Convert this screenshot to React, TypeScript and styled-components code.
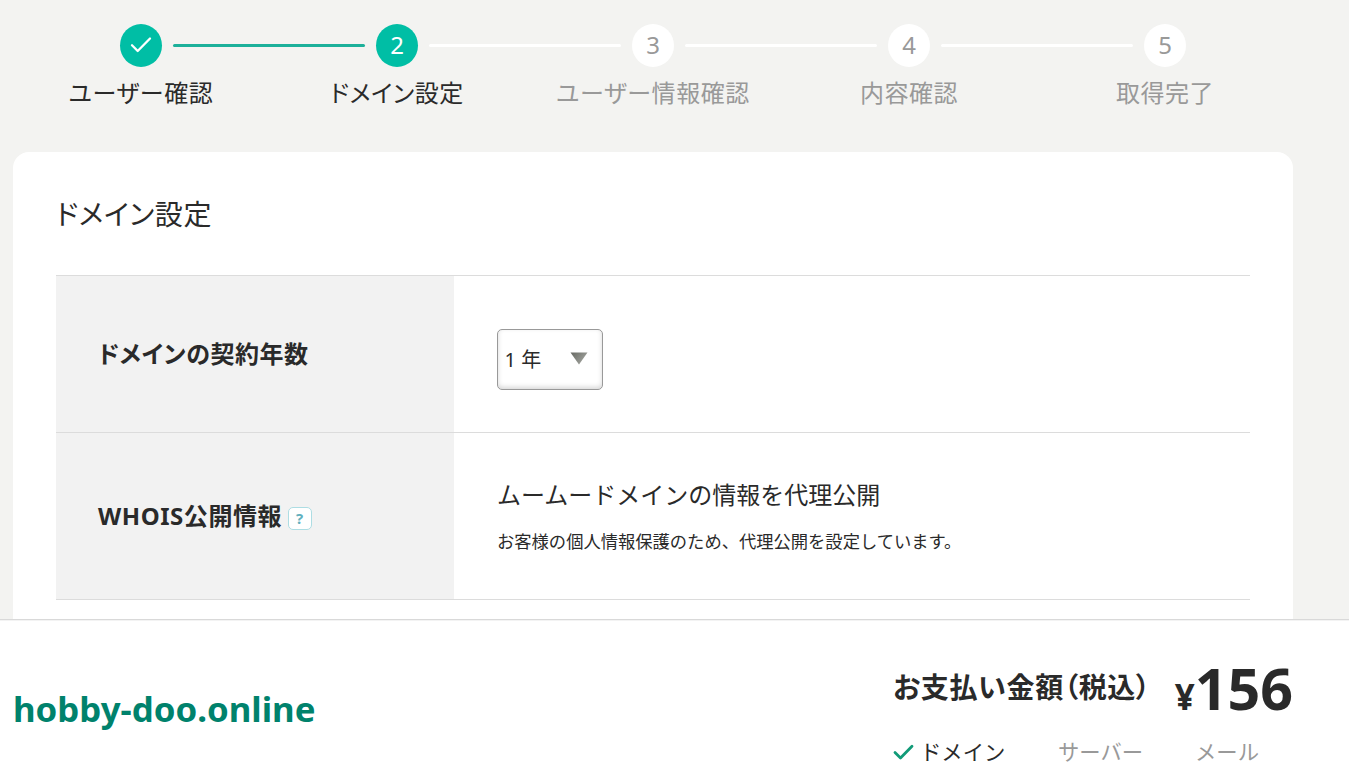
import React from "react";
import styled, { createGlobalStyle, css } from "styled-components";

const GlobalStyle = createGlobalStyle`
  * { box-sizing: border-box; }
  html, body { margin: 0; height: 100%; overflow: hidden; }
  body {
    background: #f3f3f1;
    color: #2a2a2a;
    font-family: "Noto Sans", "Noto Sans CJK JP", sans-serif;
    font-size: 24px;
    font-feature-settings: "palt";
    letter-spacing: 0.02em;
  }
`;

const Page = styled.div`
  display: flex;
  flex-direction: column;
  height: 770px;
  overflow: hidden;
`;

const Main = styled.main`
  flex: 1;
  min-height: 0;
  overflow: hidden;
  padding: 24px 56px 0 13px;
`;

const Steps = styled.ol`
  display: flex;
  margin: 0;
  padding: 0;
  list-style: none;
  height: 128px;
`;

const Step = styled.li<{ $reached: boolean }>`
  width: 256px;
  display: flex;
  flex-direction: column;
  color: ${(p) => (p.$reached ? "#2a2a2a" : "#999")};
`;

const Track = styled.div`
  display: grid;
  grid-template-columns: 96px 42px 96px;
  column-gap: 11px;
  align-items: center;
  height: 43px;
`;

const Line = styled.span<{ $side: "left" | "right"; $tone: "done" | "todo" | "none" }>`
  height: 3px;
  background: ${(p) => (p.$tone === "done" ? "#1cb09a" : p.$tone === "todo" ? "#fff" : "transparent")};
  border-radius: ${(p) => (p.$side === "left" ? "0 2px 2px 0" : "2px 0 0 2px")};
`;

const Circle = styled.span<{ $reached: boolean }>`
  display: flex;
  align-items: center;
  justify-content: center;
  width: 42px;
  height: 43px;
  padding-bottom: 2px;
  border-radius: 50%;
  font-size: 24px;
  letter-spacing: 0;
  background: ${(p) => (p.$reached ? "#00bea5" : "#fff")};
  color: ${(p) => (p.$reached ? "#fff" : "#999")};
`;

const StepLabel = styled.span`
  margin-top: 8px;
  line-height: 36px;
  text-align: center;
  letter-spacing: 0.55px;
`;

const Card = styled.section`
  background: #fff;
  border-radius: 16px 16px 0 0;
  padding: 43px 43px 0;
  height: 480px;
`;

const Title = styled.h1`
  margin: 0 0 41px;
  font-size: 28px;
  font-weight: 400;
  line-height: 39px;
  letter-spacing: 0.65px;
`;

const Row = styled.div<{ $height: number }>`
  display: grid;
  grid-template-columns: 398px 1fr;
  height: ${(p) => p.$height}px;
  border-top: 1px solid #dcdcdc;
  &:last-child { border-bottom: 1px solid #dcdcdc; }
`;

const RowHead = styled.h2`
  display: flex;
  align-items: center;
  margin: 0;
  padding: 0 42px 4px;
  background: #f2f2f2;
  font-size: 24px;
  font-weight: 700;
  letter-spacing: 0.55px;
`;

const RowBody = styled.div`
  display: flex;
  flex-direction: column;
  justify-content: center;
  align-items: flex-start;
  padding-left: 43px;
`;

const HelpBadge = styled.button`
  width: 24px;
  height: 23px;
  margin: 8px 0 0 5.5px;
  padding: 0;
  border: 1px solid #addde3;
  border-radius: 5px;
  background: #fff;
  color: #62b0be;
  font: 700 15px/20px "Noto Sans", sans-serif;
`;

const YearSelect = styled.button`
  display: flex;
  align-items: center;
  justify-content: space-between;
  width: 106px;
  height: 61px;
  margin-top: 10px;
  padding: 0 14px 1px 6.5px;
  border: 1px solid #999;
  border-radius: 5px;
  background: #fff;
  box-shadow: inset 0 -2px 5px rgba(0, 0, 0, 0.16);
  color: #2a2a2a;
  font: 400 20px "Noto Sans", "Noto Sans CJK JP", sans-serif;
`;

const Lead = styled.p`
  margin: 0;
  line-height: 36px;
  font-feature-settings: normal;
  letter-spacing: 0;
`;

const Note = styled.p`
  margin: 16px 0 0;
  font-size: 17.3px;
  line-height: 26px;
  font-feature-settings: normal;
  letter-spacing: 0;
`;

const Footer = styled.footer`
  display: flex;
  justify-content: space-between;
  flex: none;
  height: 151px;
  border-top: 1px solid #d9d9d9;
  box-shadow: inset 0 1px 0 #f3f3f3;
  background: #fff;
  padding: 0 56px 0 13px;
`;

const DomainName = styled.strong`
  margin-top: 64px;
  font-size: 34.8px;
  line-height: 50px;
  letter-spacing: 0;
  color: #00826c;
`;

const Payment = styled.div`
  width: 400px;
  padding-top: 29px;
`;

const Total = styled.div`
  display: flex;
  align-items: flex-start;
  justify-content: space-between;
  height: 83px;
  font-weight: 700;
`;

const TotalLabel = styled.span`
  margin-top: 18px;
  font-size: 28px;
  line-height: 40px;
  letter-spacing: 0.7px;
`;

const Amount = styled.span`
  font-size: 57.3px;
  line-height: 78px;
  letter-spacing: 0;
`;

const Yen = styled.small`
  font-size: 35px;
`;

const Services = styled.ul`
  display: grid;
  grid-template-columns: 165px 137px 1fr;
  margin: 0;
  padding: 0;
  list-style: none;
  font-size: 21.33px;
  line-height: 40px;
  font-feature-settings: normal;
  letter-spacing: 0;
`;

const Service = styled.li<{ $on?: boolean }>`
  display: flex;
  align-items: center;
  gap: 6px;
  color: #999;
  ${(p) => p.$on && css`color: #2a2a2a;`}
`;

const STEPS = ["ユーザー確認", "ドメイン設定", "ユーザー情報確認", "内容確認", "取得完了"];
const CURRENT = 1;

const tone = (hidden: boolean, done: boolean) => (hidden ? "none" : done ? "done" : "todo");

export default function App() {
  return (
    <Page>
      <GlobalStyle />
      <Main>
        <Steps>
          {STEPS.map((label, i) => (
            <Step key={label} $reached={i <= CURRENT}>
              <Track>
                <Line $side="left" $tone={tone(i === 0, i <= CURRENT)} />
                <Circle $reached={i <= CURRENT}>
                  {i < CURRENT ? (
                    <svg width="22" height="18" viewBox="0 0 22 18" fill="none" stroke="#fff" strokeWidth="2.3" strokeLinecap="round" strokeLinejoin="round">
                      <path d="M2 9.2 7.7 15 20 2.5" />
                    </svg>
                  ) : (
                    i + 1
                  )}
                </Circle>
                <Line $side="right" $tone={tone(i === STEPS.length - 1, i < CURRENT)} />
              </Track>
              <StepLabel>{label}</StepLabel>
            </Step>
          ))}
        </Steps>
        <Card>
          <Title>ドメイン設定</Title>
          <div>
            <Row $height={157}>
              <RowHead>ドメインの契約年数</RowHead>
              <RowBody>
                <YearSelect type="button">
                  1 年
                  <svg width="18" height="13" viewBox="0 0 18 13">
                    <defs>
                      <linearGradient id="arrow" x1="0" y1="0" x2="1" y2="0.6">
                        <stop offset="0" stopColor="#666863" />
                        <stop offset="1" stopColor="#a2a49e" />
                      </linearGradient>
                    </defs>
                    <path d="M0.5 0.5h17L9 12.5z" fill="url(#arrow)" />
                  </svg>
                </YearSelect>
              </RowBody>
            </Row>
            <Row $height={168}>
              <RowHead>
                WHOIS公開情報
                <HelpBadge type="button">?</HelpBadge>
              </RowHead>
              <RowBody>
                <Lead>ムームードメインの情報を代理公開</Lead>
                <Note>お客様の個人情報保護のため、代理公開を設定しています。</Note>
              </RowBody>
            </Row>
          </div>
        </Card>
      </Main>
      <Footer>
        <DomainName>hobby-doo.online</DomainName>
        <Payment>
          <Total>
            <TotalLabel>お支払い金額（税込）</TotalLabel>
            <Amount>
              <Yen>¥</Yen>156
            </Amount>
          </Total>
          <Services>
            <Service $on>
              <svg width="21" height="17" viewBox="0 0 21 17" fill="none" stroke="#119b78" strokeWidth="2.8" strokeLinecap="round" strokeLinejoin="round">
                <path d="M2 8.5 7.5 14 19 2.3" />
              </svg>
              ドメイン
            </Service>
            <Service>サーバー</Service>
            <Service>メール</Service>
          </Services>
        </Payment>
      </Footer>
    </Page>
  );
}
